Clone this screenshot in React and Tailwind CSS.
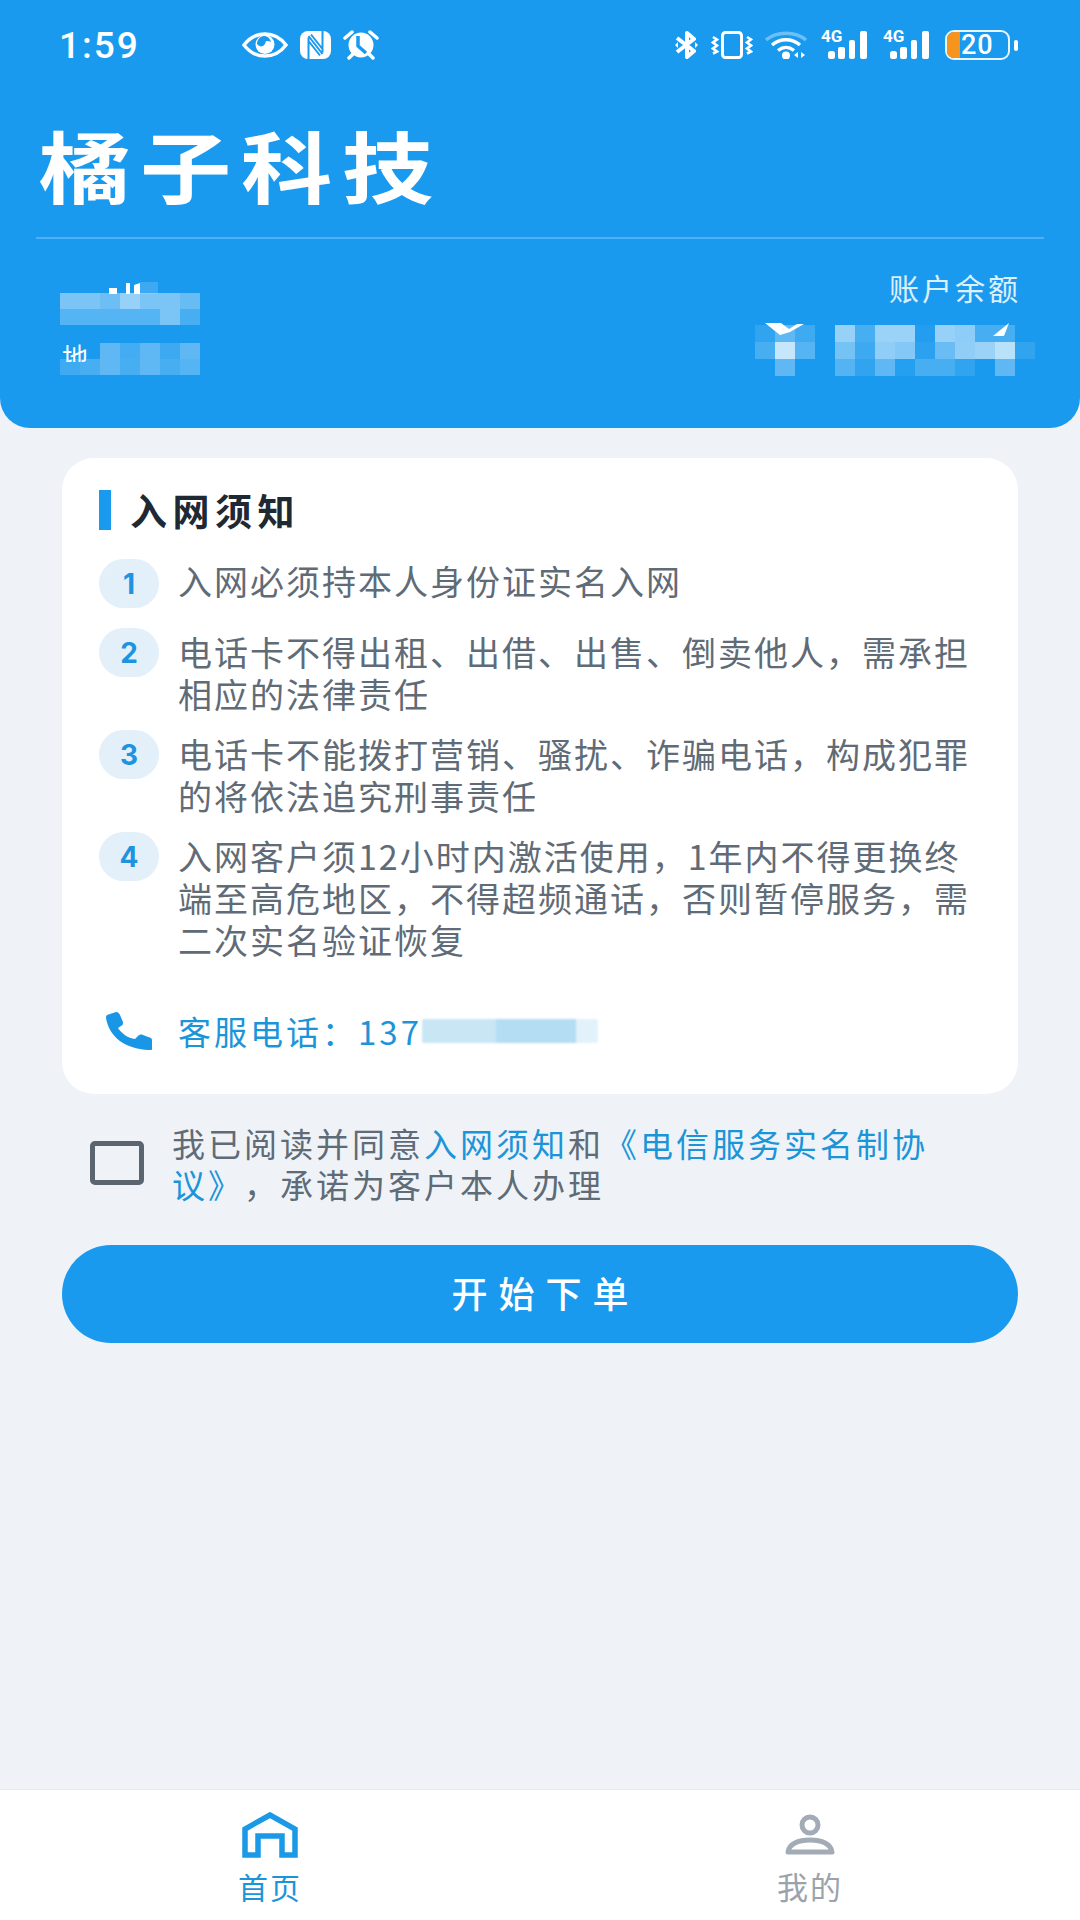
const rules = [
  { id: 1, lines: ['入网必须持本人身份证实名入网'] },
  { id: 2, lines: ['电话卡不得出租、出借、出售、倒卖他人，需承担', '相应的法律责任'] },
  { id: 3, lines: ['电话卡不能拨打营销、骚扰、诈骗电话，构成犯罪', '的将依法追究刑事责任'] },
  { id: 4, lines: ['入网客户须12小时内激活使用，1年内不得更换终', '端至高危地区，不得超频通话，否则暂停服务，需', '二次实名验证恢复'] },
];

// redacted bits of the screenshot, white cells at these opacities
const nameCells = [
  [0.42, 0.42, 0.36, 0.55, 0.42, 0.42, 0.34],
  [0.26, 0.26, 0.26, 0.26, 0.26, 0.42, 0.2],
];
const addressCells = [
  [0, 0, 0.3, 0.18, 0.3, 0.15, 0.3],
  [0.16, 0.2, 0.3, 0.2, 0.3, 0.2, 0.26],
];
const balanceCells = [
  [0.1, 0.3, 0.16, 0, 0.55, 0.2, 0.56, 0.56, 0.04, 0.55, 0.5, 0.2, 0.2, 0],
  [0.2, 0.75, 0.26, 0, 0.4, 0.15, 0.52, 0.46, 0.08, 0.35, 0.52, 0.56, 0.7, 0.1],
  [0, 0.3, 0, 0, 0.25, 0.1, 0.3, 0.05, 0.2, 0.2, 0.1, 0, 0.3, 0],
];

const Mosaic = ({ rows, cellHeight = 'h-[16px]' }) => (
  <div className="flex flex-col">
    {rows.map((row, y) => (
      <div className="flex" key={y}>
        {row.map((alpha, x) => (
          <div className={`w-[20px] ${cellHeight} bg-white`} key={x} style={{ opacity: alpha }} />
        ))}
      </div>
    ))}
  </div>
);

const EyeIcon = () => (
  <svg width="46" height="26" viewBox="0 0 46 26">
    <path d="M2 13C8 5 15 2 23 2s15 3 21 11c-6 8-13 11-21 11S8 21 2 13Z" fill="none" stroke="#fff" strokeWidth="3.4" />
    <circle cx="23" cy="12.5" r="9.5" fill="#fff" />
    <path d="M15 12c3 4 8 3 9-3 2 0 4 0 5 1-1-4-4-6-7-6-4 0-7 4-7 8Z" fill="#1a9aef" />
  </svg>
);

const NfcIcon = () => (
  <svg width="31" height="28" viewBox="0 0 31 28">
    <rect width="31" height="28" rx="8" fill="#fff" />
    <path d="M8.5 28V6.500M22.500 0v21.500M8.500 5l14 18M11 3.500l11.500 14.500M20 24.500 8.500 10" fill="none" stroke="#1a9aef" strokeWidth="2" />
  </svg>
);

const AlarmIcon = () => (
  <svg width="36" height="30" viewBox="0 0 36 30">
    <circle cx="18" cy="15" r="12.500" fill="#fff" />
    <path d="M2 8 9 2M34 8l-7-6M6 28l5-5M30 28l-5-5" stroke="#fff" strokeWidth="3.500" strokeLinecap="round" />
    <path d="M15 6v10l8 7" fill="none" stroke="#1a9aef" strokeWidth="3.500" />
  </svg>
);

const BluetoothIcon = () => (
  <svg width="25" height="28" viewBox="0 0 25 28">
    <path d="M3 7l17 13-7 6V2l7 6L3 21" fill="none" stroke="#fff" strokeWidth="4" strokeLinejoin="round" />
    <path d="M1 14l3-3v6ZM24 14l-3-3v6Z" fill="#fff" />
  </svg>
);

const VibrateIcon = () => (
  <svg width="42" height="28" viewBox="0 0 42 28">
    <rect x="11.500" y="1.500" width="19" height="25" rx="3" fill="none" stroke="#fff" strokeWidth="3" />
    <path d="M2 6l4 2.500-4 3 4 3-4 3 4 3-4 2M36 6l4 2.500-4 3 4 3-4 3 4 3-4 2" fill="none" stroke="#fff" strokeWidth="2.600" />
  </svg>
);

const WifiIcon = () => (
  <svg width="44" height="28" viewBox="0 0 44 28">
    <path d="M1 9C12 0 30 0 41 9" fill="none" stroke="#6cc0f7" strokeWidth="3.500" />
    <path d="M7 14c8-7 20-7 28 0M13 19.500c5-4 11-4 16 0" fill="none" stroke="#fff" strokeWidth="3.400" />
    <circle cx="21" cy="24.500" r="4" fill="#fff" />
    <path d="M33 21v6l-4-3ZM36 21v6l4-3Z" fill="#fff" />
  </svg>
);

const SignalIcon = () => (
  <div className="relative h-[28px] w-[50px]">
    <span className="absolute left-0 top-[-5px] text-[17px] leading-[20px] font-bold text-white font-['Roboto',sans-serif]">4G</span>
    <svg className="absolute left-0 top-0" width="50" height="28" viewBox="0 0 50 28">
      <rect x="7" y="20" width="7" height="8" rx="2.500" fill="#fff" />
      <rect x="17" y="16" width="7" height="12" rx="2" fill="#fff" />
      <rect x="28" y="9" width="6" height="19" rx="2" fill="#fff" />
      <rect x="39" y="0" width="7" height="28" rx="2" fill="#fff" />
    </svg>
  </div>
);

const Battery = () => (
  <div className="flex items-center gap-[4px]">
    <div className="relative flex h-[30px] w-[65px] items-center overflow-hidden rounded-[9px] border-2 border-white/90">
      <div className="h-full w-[13px] bg-[#f7941d]" />
      <span className="ml-[1px] text-[27px] leading-none font-medium tracking-[1px] text-white font-['Roboto',sans-serif]">20</span>
    </div>
    <div className="h-[11px] w-[4px] rounded-full bg-white" />
  </div>
);

const PhoneIcon = () => (
  <svg width="46" height="38" viewBox="0 0 46 38">
    <path d="M1 3 10 0c2 0 3 1 4 3l3 7c0 2 0 3-2 4l-3 2c4 6 10 10 17 11l3-3c1-1 3-2 5-1l8 3c1 1 1 2 1 3v8c0 1-1 2-3 1C18 37 3 24 0 6c0-1 0-2 1-3Z" fill="#1a96e6" />
  </svg>
);

const HomeIcon = () => (
  <svg width="56" height="46" viewBox="0 0 56 46">
    <path d="M3 43V17L28 3l25 14v26H40V24H16v19Z" fill="none" stroke="#1a9ae6" strokeWidth="5.500" strokeLinejoin="miter" />
  </svg>
);

const UserIcon = () => (
  <svg width="50" height="42" viewBox="0 0 50 42">
    <circle cx="25" cy="11" r="8" fill="none" stroke="#a3acb6" strokeWidth="5" />
    <path d="M3 38c1-8 10-12 22-12s21 4 22 12Z" fill="none" stroke="#a3acb6" strokeWidth="5" strokeLinejoin="round" />
  </svg>
);

const StatusBar = () => (
  <div className="flex h-[90px] items-center justify-between pl-[59px] pr-[62px]">
    <div className="flex items-center">
      <span className="w-[183px] text-[37px] leading-none font-medium tracking-[2px] text-white font-['Roboto',sans-serif]">1:59</span>
      <div className="flex items-center gap-[12px]">
        <EyeIcon />
        <NfcIcon />
        <AlarmIcon />
      </div>
    </div>
    <div className="flex items-center gap-[12px]">
      <BluetoothIcon />
      <VibrateIcon />
      <WifiIcon />
      <SignalIcon />
      <SignalIcon />
      <Battery />
    </div>
  </div>
);

const App = () => {
  return (
    <div className="flex min-h-[1920px] w-[1080px] flex-col bg-[#eff3f8] font-['Noto_Sans_CJK_SC','Noto_Sans',sans-serif] [text-spacing-trim:space-all]">
      <header className="h-[428px] rounded-b-[30px] bg-[#1a9aef]">
        <StatusBar />
        <div className="flex h-[147px] items-center px-[39px]">
          <h1 className="origin-left scale-x-[1.17] text-[78px] leading-none font-bold tracking-[8.3px] text-white">橘子科技</h1>
        </div>
        <div className="mx-[36px] h-[2px] bg-[#4fb1f5]" />
        <div className="flex justify-between pl-[60px] pr-[45px]">
          <div className="relative pt-[54px]">
            <svg className="absolute left-[44px] top-[43px]" width="70" height="12" viewBox="0 0 70 12">
              <path d="M5 6h8v6H5ZM22 1h4v11h-4ZM30 3l6-2v11h-6Z" fill="#fff" />
              <path d="M36 0h18v12H36Z" fill="#3ca9f2" />
            </svg>
            <Mosaic rows={nameCells} />
            <div className="relative mt-[18px] h-[32px]">
              <span className="absolute left-[2px] top-[-1px] h-[20px] overflow-hidden text-[26px] leading-[28px] text-white">地</span>
              <div className="absolute left-0 top-0">
                <Mosaic rows={addressCells} />
              </div>
            </div>
          </div>
          <div className="relative flex flex-col items-end">
            <span className="mt-[32px] mr-[14px] text-[30px] leading-[32px] tracking-[3px] text-white/85">账户余额</span>
            <div className="mt-[22px]">
              <Mosaic rows={balanceCells} cellHeight="h-[17px]" />
            </div>
            <svg className="absolute left-[10px] top-[83px]" width="260" height="14" viewBox="0 0 260 14">
              <path d="M0 1h16l8 6 8-5h7l-14 8-10 3Z" fill="#fff" />
              <path d="M228 14l16-13-5 13Z" fill="#fff" />
            </svg>
          </div>
        </div>
      </header>

      <main className="flex-1 px-[62px] pt-[30px]">
        <section className="h-[636px] rounded-[32px] bg-white pl-[37px] pt-[32px]">
          <div className="flex h-[40px] items-center gap-[19px]">
            <div className="h-[40px] w-[12px] bg-[#1a9aef]" />
            <h2 className="text-[37px] leading-none font-bold tracking-[5.5px] text-[#1f2933]">入网须知</h2>
          </div>
          <ul className="mt-[29px] flex flex-col gap-[15px]">
            {rules.map((rule) => (
              <li className="flex min-h-[54px] items-start gap-[19px]" key={rule.id}>
                <div className="flex h-[49px] w-[60px] shrink-0 items-center justify-center rounded-full bg-[#e3f0fa] text-[28px] font-bold text-[#1f93e0] font-['Inter',sans-serif]">{rule.id}</div>
                <div className={rule.lines.length === 1 ? 'pt-[1px] text-[34px] leading-[42px] tracking-[2px] text-[#5f6b76]' : 'pt-[3px] text-[34px] leading-[42px] tracking-[2px] text-[#5f6b76]'}>
                  {rule.lines.map((line) => (
                    <span className="block whitespace-nowrap" key={line}>{line}</span>
                  ))}
                </div>
              </li>
            ))}
          </ul>
          <div className="mt-[50px] flex items-center">
            <div className="ml-[7px] mr-[26px] flex"><PhoneIcon /></div>
            <span className="text-[33px] leading-[40px] tracking-[3px] whitespace-nowrap text-[#1c95d8]">客服电话：137</span>
            <div className="flex h-[24px] w-[176px] overflow-hidden rounded-[2px] blur-[1px]">
              <div className="w-[74px] bg-[#c9e6f5]" />
              <div className="w-[80px] bg-[#b4dcf2]" />
              <div className="w-[22px] bg-[#e3f2fa]" />
            </div>
          </div>
        </section>

        <div className="mt-[18px] flex items-start pl-[28px]">
          <div className="mt-[29px] h-[44px] w-[54px] shrink-0 rounded-[5px] border-[5px] border-[#5a6570]" />
          <p className="ml-[28px] w-[790px] pt-[11px] text-[33px] leading-[41px] tracking-[3px] text-[#5f6b76]">
            我已阅读并同意<span className="text-[#1c95d8]">入网须知</span>和<span className="text-[#1c95d8]">《电信服务实名制协议》</span>，承诺为客户本人办理
          </p>
        </div>

        <button className="mt-[40px] flex h-[98px] w-full items-center justify-center rounded-full bg-[#1a9aef] pb-[4px] pl-[11px] text-[36px] font-medium tracking-[11px] text-white" type="button">
          开始下单
        </button>
      </main>

      <nav className="flex h-[131px] border-t border-[#e5e9ee] bg-white">
        <div className="flex w-1/2 flex-col items-center pt-[22px]">
          <HomeIcon />
          <span className="mt-[13px] text-[30px] leading-[30px] tracking-[2px] text-[#1c95d8]">首页</span>
        </div>
        <div className="flex w-1/2 flex-col items-center pt-[24px]">
          <UserIcon />
          <span className="mt-[15px] text-[31px] leading-[30px] tracking-[2px] text-[#9aa3ad]">我的</span>
        </div>
      </nav>
    </div>
  );
};

export default App;
